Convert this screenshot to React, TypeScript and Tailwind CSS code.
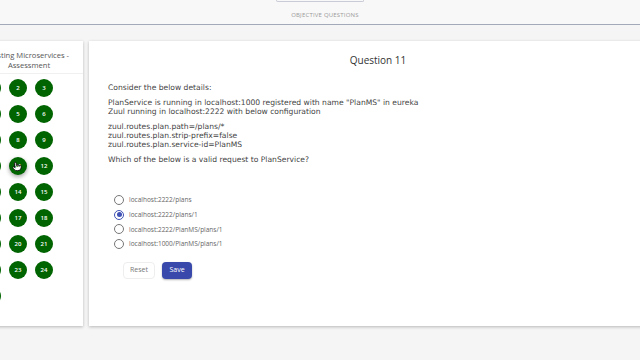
import { Pointer } from 'lucide-react';

const numbers = Array.from({ length: 25 }, (_, i) => i + 1);

const options = [
  'localhost:2222/plans',
  'localhost:2222/plans/1',
  'localhost:2222/PlanMS/plans/1',
  'localhost:1000/PlanMS/plans/1',
];

export default function App() {
  const selected = 1;
  const current = 11;

  return (
    <div className="w-[640px] h-[360px] overflow-hidden bg-[#f5f5f5] font-['Open_Sans',sans-serif]">
      {/* header */}
      <div className="h-[25px] bg-[#f8f8f8] border-b-[1.5px] border-[#a4a9b9] flex flex-col items-center">
        <div className="w-[88px] h-[2px] border-x border-b border-[#c9ccd6] rounded-b-sm" />
        <div className="mt-[9px] ml-[10px] text-[6px] tracking-[0.2px] text-[#9a9a9a] uppercase">
          Objective Questions
        </div>
      </div>

      <div className="flex gap-[6px] mt-[16px]">
        {/* question navigator */}
        <div className="ml-[-27px] w-[110px] h-[285px] shrink-0 bg-white shadow-[0_1px_3px_rgba(0,0,0,0.25)]">
          <div className="pt-[9px] pb-[3px] pl-[2px] border-b border-[#f0f0f0] text-center text-[7.6px] leading-[10px] text-[#555] whitespace-nowrap">
            Testing Microservices -<br />
            Assessment
          </div>
          <div className="grid grid-cols-[repeat(3,18px)] gap-x-[8px] gap-y-[8px] pl-[10px] pt-[5px]">
            {numbers.map((n) => (
              <div
                key={n}
                className={`relative w-[18px] h-[18px] rounded-full bg-[#006400] flex items-center justify-center text-[6px] font-semibold text-white ${
                  n === current ? 'shadow-[0_2px_4px_rgba(0,0,0,0.35)]' : ''
                }`}
              >
                {n}
                {n === current && (
                  <Pointer className="absolute left-[3px] top-[4px] w-[10px] h-[11px] text-black fill-white" strokeWidth={2} />
                )}
              </div>
            ))}
          </div>
        </div>

        {/* question */}
        <div className="flex-1 mr-[-30px] h-[285px] bg-white shadow-[0_1px_3px_rgba(0,0,0,0.25)] pl-[19px] pt-[12px]">
          <div className="text-center pr-[22px] text-[10px] leading-[14px] text-[#333]">Question 11</div>

          <div className="mt-[16px] font-['DejaVu_Sans',sans-serif] text-[7.6px] leading-[9px] text-[#444]">
            <p>Consider the below details:</p>
            <p className="mt-[6px]">
              PlanService is running in localhost:1000 registered with name "PlanMS" in eureka
            </p>
            <p>Zuul running in localhost:2222 with below configuration</p>
            <p className="mt-[6px]">zuul.routes.plan.path=/plans/*</p>
            <p>zuul.routes.plan.strip-prefix=false</p>
            <p>zuul.routes.plan.service-id=PlanMS</p>
            <p className="mt-[6px]">Which of the below is a valid request to PlanService?</p>
          </div>

          <div className="mt-[31px] pl-[6px] flex flex-col gap-[4.7px]">
            {options.map((o, i) => (
              <label key={o} className="flex items-center gap-[5px] h-[10px] text-[6.5px] text-[#666]">
                <span
                  className={`w-[10px] h-[10px] rounded-full border flex items-center justify-center ${
                    i === selected ? 'border-[#3f51b5]' : 'border-[#777]'
                  }`}
                >
                  {i === selected && <span className="w-[5px] h-[5px] rounded-full bg-[#3f51b5]" />}
                </span>
                {o}
              </label>
            ))}
          </div>

          <div className="mt-[13px] ml-[15px] flex gap-[7px]">
            <button className="w-[32px] h-[17px] bg-white border border-[#eee] rounded-sm text-[7px] text-[#777]">
              Reset
            </button>
            <button className="w-[30px] h-[17px] bg-[#3949ab] rounded-sm text-[7px] text-white shadow-[0_1px_2px_rgba(0,0,0,0.3)]">
              Save
            </button>
          </div>
        </div>
      </div>
    </div>
  );
}
